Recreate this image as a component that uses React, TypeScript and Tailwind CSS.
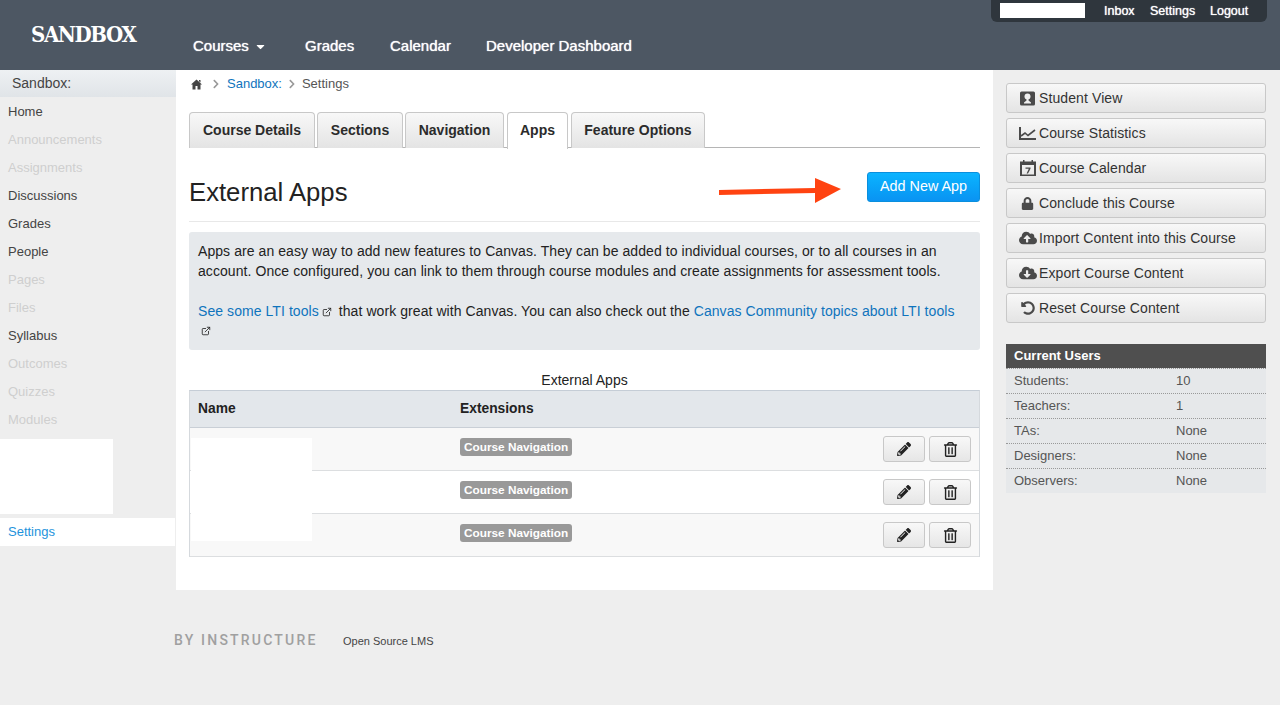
import React from 'react';
import { FaLock, FaCloudUploadAlt, FaCloudDownloadAlt, FaUndoAlt, FaChevronRight, FaPencilAlt, FaRegTrashAlt, FaCaretDown } from 'react-icons/fa';
import { ExternalLink } from 'lucide-react';

const navItems = [
  { label: 'Home', on: true },
  { label: 'Announcements' },
  { label: 'Assignments' },
  { label: 'Discussions', on: true },
  { label: 'Grades', on: true },
  { label: 'People', on: true },
  { label: 'Pages' },
  { label: 'Files' },
  { label: 'Syllabus', on: true },
  { label: 'Outcomes' },
  { label: 'Quizzes' },
  { label: 'Modules' },
];

const tabs = [
  { label: 'Course Details', cls: 'w-[126px]' },
  { label: 'Sections', cls: 'w-[86px]' },
  { label: 'Navigation', cls: 'w-[99px]' },
  { label: 'Apps', cls: 'ml-[1px] w-[61px]' },
  { label: 'Feature Options', cls: 'ml-[1px] w-[134px]' },
];

const users = [
  ['Students:', '10'],
  ['Teachers:', '1'],
  ['TAs:', 'None'],
  ['Designers:', 'None'],
  ['Observers:', 'None'],
];

const HomeIcon = () => (
  <svg width="11" height="11" viewBox="0 0 11 11">
    <path d="M5.5 0.5L11 5.5H9.5V10.5H6.5V7H4.500V10.5H1.500V5.500H0zM8 1h1.500V3.500L8 2.200z" fill="#444" />
  </svg>
);

const StudentIcon = () => (
  <svg width="15" height="15" viewBox="0 0 15 15">
    <rect x="0" y="0.5" width="15" height="14" rx="1.5" fill="#4a4a4a" />
    <circle cx="7.5" cy="5.5" r="3" fill="#eee" />
    <path d="M6.5 8h2v1.5l2.500 2v1H4v-1l2.500-2z" fill="#eee" />
  </svg>
);

const StatsIcon = () => (
  <svg width="17" height="15" viewBox="0 0 17 15">
    <path d="M1 1v12h16" fill="none" stroke="#4a4a4a" strokeWidth="2" />
    <path d="M2 10l4-3 3 2.500L16 4" fill="none" stroke="#4a4a4a" strokeWidth="1.6" />
  </svg>
);

const CalendarIcon = () => (
  <svg width="16" height="16" viewBox="0 0 16 16">
    <rect x="1" y="2.500" width="14" height="13" fill="none" stroke="#4a4a4a" strokeWidth="2" />
    <rect x="1" y="2" width="14" height="3" fill="#4a4a4a" />
    <rect x="3" y="0" width="1.500" height="2" fill="#4a4a4a" />
    <rect x="11.500" y="0" width="1.500" height="2" fill="#4a4a4a" />
    <path d="M5.500 7.500h5v1.200L8 13.500H6.600L8.800 8.800H5.500z" fill="#4a4a4a" />
  </svg>
);

const sideButtons = [
  { label: 'Student View', icon: <StudentIcon /> },
  { label: 'Course Statistics', icon: <StatsIcon /> },
  { label: 'Course Calendar', icon: <CalendarIcon /> },
  { label: 'Conclude this Course', icon: <FaLock size={13} color="#4a4a4a" /> },
  { label: 'Import Content into this Course', icon: <FaCloudUploadAlt size={18} color="#4a4a4a" /> },
  { label: 'Export Course Content', icon: <FaCloudDownloadAlt size={18} color="#4a4a4a" /> },
  { label: 'Reset Course Content', icon: <FaUndoAlt size={14} color="#4a4a4a" /> },
];

const TableRow = ({ striped }: { striped?: boolean }) => (
  <div className={`flex h-[43px] border-b border-[#dcdee0] ${striped ? 'bg-[#f8f8f8]' : 'bg-white'}`}>
    <div className="w-[262px]" />
    <div className="flex flex-1 items-start justify-between pl-[8px] pr-[8px]">
      <span className="mt-[10px] rounded-[3px] bg-[#999999] px-[4px] text-[11.8px] leading-[18px] font-bold text-white">
        Course Navigation
      </span>
      <div className="mt-[8px] flex gap-[4px]">
        <button className="flex h-[26px] w-[42px] items-center justify-center rounded-[3px] border border-[#c8c8c8] bg-gradient-to-b from-[#f8f8f8] to-[#e6e6e6]">
          <FaPencilAlt size={14} color="#222" />
        </button>
        <button className="flex h-[26px] w-[42px] items-center justify-center rounded-[3px] border border-[#c8c8c8] bg-gradient-to-b from-[#f8f8f8] to-[#e6e6e6]">
          <FaRegTrashAlt size={15} color="#222" />
        </button>
      </div>
    </div>
  </div>
);

export default function App() {
  return (
    <div className="relative min-h-[705px] bg-[#eeeeee] font-['Liberation_Sans',Arial,sans-serif] text-[14px] text-[#2d3b45]">
      {/* header */}
      <header className="relative flex h-[70px] items-start bg-[#4d5763]">
        <div className="mt-[20px] ml-[31px] w-[162px] font-['DejaVu_Serif',serif] text-[22px] leading-[28px] font-bold tracking-[-1.4px] text-white [font-stretch:condensed]">
          SANDBOX
        </div>
        <nav className="mt-[36px] flex text-[15px] leading-[20px] text-white [text-shadow:0_0_1px_#fff]">
          <span className="flex w-[112px] items-center">
            Courses
            <FaCaretDown size={13} className="ml-[5px]" />
          </span>
          <span className="w-[85px]">Grades</span>
          <span className="w-[96px]">Calendar</span>
          <span>Developer Dashboard</span>
        </nav>
        <div className="absolute top-0 left-[991px] flex h-[22px] w-[276px] items-center rounded-b-[6px] bg-[#2f363d] text-[12.5px] text-white [text-shadow:0_0_1px_#fff]">
          <div className="mt-[-1px] ml-[9px] h-[15px] w-[85px] bg-white" />
          <span className="ml-[19px] w-[46px]">Inbox</span>
          <span className="w-[60px]">Settings</span>
          <span>Logout</span>
        </div>
      </header>

      <div className="flex">
        {/* left nav */}
        <aside className="w-[176px]">
          <div className="h-[27px] bg-gradient-to-b from-[#eef1f3] to-[#e0e4e8] pl-[12px] leading-[27px] text-[#444]">Sandbox:</div>
          {navItems.map((item) => (
            <div key={item.label} className={`h-[28px] pl-[8px] text-[13px] leading-[30px] ${item.on ? 'text-[#444]' : 'text-[#cfcfcf]'}`}>
              {item.label}
            </div>
          ))}
          <div className="mt-[6px] h-[75px] w-[113px] bg-white" />
          <div className="mt-[4px] h-[28px] w-[175px] bg-white pl-[8px] text-[13px] leading-[28px] text-[#1e93dc]">Settings</div>
        </aside>

        {/* main column */}
        <main className="h-[520px] w-[817px] bg-white px-[13px]">
          <div className="flex h-[28px] items-center text-[13px] text-[#555]">
            <span className="ml-[2px]"><HomeIcon /></span>
            <FaChevronRight size={10} color="#999" className="mr-[6px] ml-[9px]" />
            <span className="text-[#0f74bd]">Sandbox:</span>
            <FaChevronRight size={10} color="#999" className="mx-[5px]" />
            <span>Settings</span>
          </div>

          <div className="mt-[14px] flex h-[36px] gap-[2px] border-b border-[#b5b5b5] text-[14px] font-bold">
            {tabs.map((tab) => (
              <div
                key={tab.label}
                className={`h-[36px] rounded-t-[4px] border border-b-0 border-[#c8c8c8] text-center leading-[34px] text-[#2b2b2b] ${tab.cls} ${
                  tab.label === 'Apps' ? 'h-[37px] bg-white' : 'bg-gradient-to-b from-[#f8f8f8] to-[#e4e4e4]'
                }`}
              >
                {tab.label}
              </div>
            ))}
          </div>

          <div className="relative flex h-[74px] items-center justify-between border-b border-[#e8e8e8]">
            <h1 className="mt-[15px] text-[25.7px] font-normal text-[#222]">External Apps</h1>
            <button className="mb-[-4px] h-[30px] w-[113px] rounded-[3px] border border-[#0a8fdd] bg-gradient-to-b from-[#0cb4ff] to-[#0a93f2] text-[14.4px] text-white">
              Add New App
            </button>
            <svg className="absolute top-[24px] left-[530px]" width="125" height="32" viewBox="0 0 125 32">
              <path d="M0 18l96-2V6l26 11-26 14V21l-96 2z" fill="#ff4311" />
            </svg>
          </div>

          <div className="mt-[10px] h-[118px] rounded-[3px] bg-[#e6e9ec] px-[9px] pt-[9px] text-[14px] leading-[20px] tracking-[0.07px] text-[#222]">
            <p>
              Apps are an easy way to add new features to Canvas. They can be added to individual courses, or to all courses in an account. Once configured, you can link to them through course modules and create assignments for assessment tools.
            </p>
            <p className="mt-[20px]">
              <span className="text-[#0f74bd]">See some LTI tools</span>
              <ExternalLink size={10} className="mx-[3px] inline align-[-1px]" />
              <span> that work great with Canvas. You can also check out the </span>
              <span className="text-[#0f74bd]">Canvas Community topics about LTI tools</span>
              <br />
              <ExternalLink size={10} className="ml-[3px] inline align-[0px]" />
            </p>
          </div>

          <div className="relative">
            <div className="h-[40px] pt-[20px] text-center text-[14px] leading-[20px] text-[#222]">External Apps</div>
            <div className="border border-t-[#c5cdd6] border-r-[#d5d9dd] border-b-0 border-l-[#d5d9dd]">
              <div className="flex h-[37px] items-center border-b border-[#c9cfd6] bg-[#e3e7eb] text-[13.8px] font-bold text-[#222]">
                <div className="w-[262px] pl-[8px]">Name</div>
                <div className="pl-[8px]">Extensions</div>
              </div>
              <TableRow striped />
              <TableRow />
              <TableRow striped />
            </div>
            {/* covers the app names, blanked out in the picture */}
            <div className="absolute top-[88px] left-[2px] h-[103px] w-[121px] bg-white" />
          </div>
        </main>

        {/* right column */}
        <aside className="flex w-[287px] flex-col pt-[13px] pl-[13px]">
          <div className="flex w-[260px] flex-col gap-[5px]">
            {sideButtons.map((b) => (
              <div key={b.label} className="flex h-[30px] items-center rounded-[3px] border border-[#c8c8c8] bg-gradient-to-b from-[#f8f8f8] to-[#e4e4e4] text-[14px] tracking-[0.1px] text-[#333]">
                <span className="mr-[1px] ml-[10px] flex w-[21px] shrink-0 justify-center">{b.icon}</span>
                {b.label}
              </div>
            ))}
          </div>
          <div className="mt-[21px] w-[260px]">
            <div className="h-[24px] bg-[#4f4f4f] pl-[8px] text-[13px] leading-[23px] font-bold text-white">Current Users</div>
            {users.map(([k, v]) => (
              <div key={k} className="flex h-[25px] border-t border-dotted border-[#999] bg-[#e6e8ea] text-[13px] leading-[24px] text-[#555]">
                <span className="w-[170px] pl-[8px]">{k}</span>
                <span>{v}</span>
              </div>
            ))}
          </div>
        </aside>
      </div>

      {/* footer */}
      <footer className="flex items-center pt-[40px] pl-[174px]">
        <span className="w-[169px] font-['Roboto',sans-serif] text-[14px] font-medium tracking-[2.2px] text-[#a0a0a0]">BY INSTRUCTURE</span>
        <span className="mt-[2px] text-[11px] text-[#444]">Open Source LMS</span>
      </footer>
    </div>
  );
}
